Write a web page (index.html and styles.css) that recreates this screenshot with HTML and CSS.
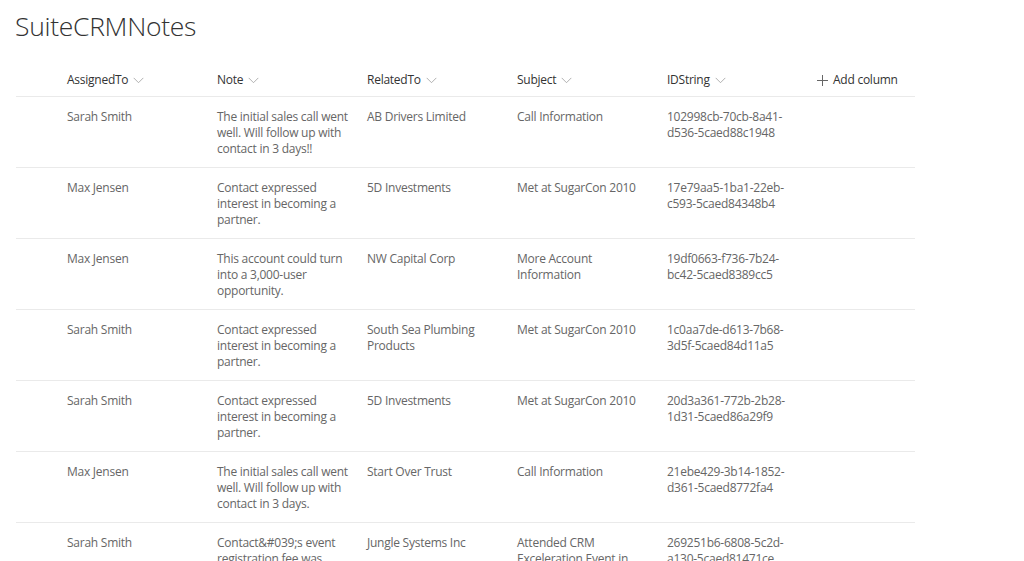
FILE: index.html
```html
<!DOCTYPE html>
<html>
<head>
<meta charset="utf-8">
<title>SuiteCRMNotes</title>
<link rel="stylesheet" href="styles.css">
</head>
<body>
<h1 class="title">SuiteCRMNotes</h1>
<div class="list">
  <div class="row header">
    <div class="check"></div>
    <div class="cell hcell">AssignedTo <svg class="chev" viewBox="0 0 12 8"><path d="M0.5 1 L6 6.5 L11.5 1"/></svg></div>
    <div class="cell hcell">Note <svg class="chev" viewBox="0 0 12 8"><path d="M0.5 1 L6 6.5 L11.5 1"/></svg></div>
    <div class="cell hcell">RelatedTo <svg class="chev" viewBox="0 0 12 8"><path d="M0.5 1 L6 6.5 L11.5 1"/></svg></div>
    <div class="cell hcell">Subject <svg class="chev" viewBox="0 0 12 8"><path d="M0.5 1 L6 6.5 L11.5 1"/></svg></div>
    <div class="cell hcell">IDString <svg class="chev" viewBox="0 0 12 8"><path d="M0.5 1 L6 6.5 L11.5 1"/></svg></div>
    <div class="cell hcell add"><svg class="plus" viewBox="0 0 11 11"><path d="M5.5 0 V11 M0 5.5 H11"/></svg>Add column</div>
  </div>
  <div class="row">
    <div class="check"></div>
    <div class="cell">Sarah Smith</div>
    <div class="cell">The initial sales call went well. Will follow up with contact in 3 days!!</div>
    <div class="cell">AB Drivers Limited</div>
    <div class="cell">Call Information</div>
    <div class="cell">102998cb-70cb-8a41-d536-5caed88c1948</div>
  </div>
  <div class="row">
    <div class="check"></div>
    <div class="cell">Max Jensen</div>
    <div class="cell">Contact expressed interest in becoming a partner.</div>
    <div class="cell">5D Investments</div>
    <div class="cell">Met at SugarCon 2010</div>
    <div class="cell">17e79aa5-1ba1-22eb-c593-5caed84348b4</div>
  </div>
  <div class="row">
    <div class="check"></div>
    <div class="cell">Max Jensen</div>
    <div class="cell">This account could turn into a 3,000-user opportunity.</div>
    <div class="cell">NW Capital Corp</div>
    <div class="cell">More Account Information</div>
    <div class="cell">19df0663-f736-7b24-bc42-5caed8389cc5</div>
  </div>
  <div class="row">
    <div class="check"></div>
    <div class="cell">Sarah Smith</div>
    <div class="cell">Contact expressed interest in becoming a partner.</div>
    <div class="cell">South Sea Plumbing Products</div>
    <div class="cell">Met at SugarCon 2010</div>
    <div class="cell">1c0aa7de-d613-7b68-3d5f-5caed84d11a5</div>
  </div>
  <div class="row">
    <div class="check"></div>
    <div class="cell">Sarah Smith</div>
    <div class="cell">Contact expressed interest in becoming a partner.</div>
    <div class="cell">5D Investments</div>
    <div class="cell">Met at SugarCon 2010</div>
    <div class="cell">20d3a361-772b-2b28-1d31-5caed86a29f9</div>
  </div>
  <div class="row">
    <div class="check"></div>
    <div class="cell">Max Jensen</div>
    <div class="cell">The initial sales call went well. Will follow up with contact in 3 days.</div>
    <div class="cell">Start Over Trust</div>
    <div class="cell">Call Information</div>
    <div class="cell">21ebe429-3b14-1852-d361-5caed8772fa4</div>
  </div>
  <div class="row">
    <div class="check"></div>
    <div class="cell">Sarah Smith</div>
    <div class="cell">Contact&amp;#039;s event registration fee was waived.</div>
    <div class="cell">Jungle Systems Inc</div>
    <div class="cell">Attended CRM Exceleration Event in Cupertino</div>
    <div class="cell">269251b6-6808-5c2d-a130-5caed81471ce</div>
  </div>
</div>
</body>
</html>
```

FILE: styles.css
```css
html, body {
  margin: 0;
  padding: 0;
  background: #ffffff;
  overflow: hidden;
}
body {
  font-family: "Open Sans", "Noto Sans", sans-serif;
  color: #333333;
  height: 561px;
}
.title {
  margin: 0;
  padding: 6px 16px 0 15px;
  height: 58px;
  font-size: 26.5px;
  line-height: 40px;
  font-weight: 300;
  color: #333333;
  letter-spacing: -0.3px;
}
.list {
  margin-left: 16px;
  width: 899px;
}
.row {
  display: flex;
  height: 70px;
  border-bottom: 1px solid #eaeaea;
  font-size: 12px;
  line-height: 16px;
  color: #666666;
}
.row.header {
  height: 32px;
  color: #333333;
}
.check {
  width: 43px;
  flex: none;
}
.cell {
  width: 134px;
  flex: none;
  padding: 12px 8px 0 8px;
  letter-spacing: -0.25px;
}
.hcell {
  padding-top: 0;
  line-height: 32px;
  display: flex;
  align-items: center;
  white-space: nowrap;
}
.chev {
  width: 11px;
  height: 7px;
  margin-left: 5px;
  fill: none;
  stroke: #a6a6a6;
  stroke-width: 1;
}
.plus {
  width: 11px;
  height: 11px;
  margin-right: 5px;
  fill: none;
  stroke: #666666;
  stroke-width: 1;
}
```
